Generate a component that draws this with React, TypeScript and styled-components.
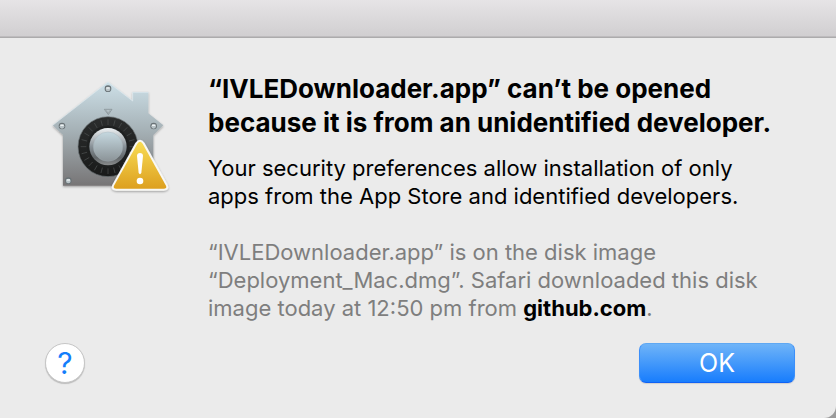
import React from "react";
import styled, { createGlobalStyle } from "styled-components";

const GlobalStyle = createGlobalStyle`
  * { box-sizing: border-box; }
  body {
    margin: 0;
    background: #9b9b9b;
    color: #000;
    font-family: Inter, "Liberation Sans", sans-serif;
  }
`;

const Dialog = styled.main`
  display: flex;
  flex-direction: column;
  min-height: 100vh;
  background: #ebebeb;
  border-bottom-right-radius: 12px;
`;

const TitleBar = styled.header`
  height: 38px;
  background: linear-gradient(#e6e4e6, #d0ced0);
  border-bottom: 1px solid #acabac;
  box-shadow: inset 0 -1px #bdbbbd;
`;

const Content = styled.section`
  display: flex;
  gap: 33px;
  padding: 34px 24px 0 45px;
`;

const IconBox = styled.div`
  flex: none;
  width: 130px;
  padding-top: 6px;

  svg { display: block; width: 100%; }
`;

const Message = styled.div`
  flex: 1;
`;

const Title = styled.h1`
  margin: 0 0 14px;
  font-size: 26px;
  line-height: 34px;
  font-weight: 700;
`;

const Text = styled.p<{ $muted?: boolean }>`
  margin: 0 0 ${(p) => (p.$muted ? 0 : 28)}px;
  font-size: 22px;
  line-height: 28px;
  color: ${(p) => (p.$muted ? "#7e7e7e" : "#000")};
`;

const SiteLink = styled.a`
  color: #000;
  font-weight: 700;
  text-decoration: none;
`;

const Footer = styled.footer`
  display: flex;
  align-items: center;
  justify-content: space-between;
  margin-top: auto;
  padding: 20px 41px 35px 45px;
`;

const HelpButton = styled.button`
  display: grid;
  place-items: center;
  width: 40px;
  height: 40px;
  padding: 0;
  border: 1px solid #c6c6c6;
  border-radius: 50%;
  background: #fff;
  box-shadow: 0 1px 1px rgba(0, 0, 0, 0.2);
  color: #147efb;
  font: 400 30px/30px Inter, sans-serif;
`;

const OkButton = styled.button`
  width: 156px;
  height: 40px;
  padding: 0;
  border: 1px solid;
  border-color: #5fa8f3 #3b8ffa #0f62f5;
  border-radius: 7px;
  background: linear-gradient(#6fb4f8, #187dfd);
  box-shadow: 0 1px 1px rgba(0, 0, 0, 0.12);
  color: #fff;
  font: 400 25px/36px Inter, sans-serif;
`;

const ticks = Array.from({ length: 24 }, (_, i) => i * 15);
const screws = [[204, 56], [66, 168], [341, 168], [85, 332]];

function GatekeeperIcon() {
  return (
    <svg viewBox="15 24 390 360" role="img" aria-label="Security warning">
      <defs>
        <linearGradient id="house" x1="0" y1="0" x2="0" y2="1">
          <stop offset="0" stopColor="#cde0e8" />
          <stop offset="0.45" stopColor="#a7b3b8" />
          <stop offset="1" stopColor="#777576" />
        </linearGradient>
        <linearGradient id="rim" x1="0" y1="0" x2="0" y2="1">
          <stop offset="0" stopColor="#eef2f4" />
          <stop offset="0.5" stopColor="#879096" />
          <stop offset="0.8" stopColor="#62676a" />
          <stop offset="1" stopColor="#8b8d8e" />
        </linearGradient>
        <linearGradient id="knob" x1="0" y1="0" x2="0" y2="1">
          <stop offset="0" stopColor="#c5d8e0" />
          <stop offset="1" stopColor="#8b9397" />
        </linearGradient>
        <linearGradient id="dial" x1="0" y1="0" x2="0" y2="1">
          <stop offset="0" stopColor="#2b2d2d" />
          <stop offset="1" stopColor="#191a1a" />
        </linearGradient>
        <linearGradient id="warning" x1="0" y1="0" x2="0" y2="1">
          <stop offset="0" stopColor="#f8dc55" />
          <stop offset="1" stopColor="#dda01f" />
        </linearGradient>
        <filter id="shadow" x="-10%" y="-10%" width="120%" height="125%">
          <feDropShadow dx="0" dy="3" stdDeviation="3" floodOpacity="0.35" />
        </filter>
      </defs>
      <path
        d="M204 35 L278 92 V66 H325 V130 L370 166 L340 195 V347 H69 V195 L38 166 Z"
        fill="url(#house)"
        filter="url(#shadow)"
      />
      <path d="M38 166 L204 36 L278 93 V67 H325" fill="none" stroke="#e2edf1" strokeWidth="2" />
      {screws.map(([x, y]) => (
        <g key={`${x}-${y}`}>
          <circle cx={x} cy={y} r="10" fill="#697276" />
          <circle cx={x} cy={y + 1} r="7" fill="#b9c3c7" />
          <path d={`M${x - 5} ${y - 2} h10`} stroke="#eef3f5" strokeWidth="4" />
        </g>
      ))}
      <path d="M193 118 H216 L205 134 Z" fill="#b5c2c7" stroke="#7e898e" strokeWidth="2" />
      <path d="M199 121 L204 131 L210 121" fill="none" stroke="#8c979b" strokeWidth="2" />
      <circle cx="204" cy="230" r="90" fill="url(#dial)" stroke="#737a7d" strokeWidth="2" />
      {ticks.map((angle) => (
        <path
          key={angle}
          d="M204 148 v17"
          transform={`rotate(${angle} 204 230)`}
          stroke="#4c5050"
          strokeWidth="2"
        />
      ))}
      <circle cx="204" cy="230" r="63" fill="#1e2020" />
      <circle cx="204" cy="230" r="56" fill="url(#rim)" />
      <circle cx="204" cy="230" r="44" fill="url(#knob)" stroke="#a5b1b6" strokeWidth="1" />
      <path
        d="M286 219 Q300 200 314 219 L383 344 Q390 361 371 362 H229 Q210 361 217 344 Z"
        fill="#f8f8f5"
        filter="url(#shadow)"
      />
      <path
        d="M292 221 Q300 210 308 221 L378 347 Q382 355 371 356 H229 Q218 355 222 347 Z"
        fill="url(#warning)"
      />
      <path d="M291 258 Q291 249 300 249 Q309 249 309 258 L304 309 Q300 316 296 309 Z" fill="#fff" />
      <circle cx="300" cy="333" r="10" fill="#fff" />
    </svg>
  );
}

export default function App() {
  return (
    <>
      <GlobalStyle />
      <Dialog role="alertdialog" aria-labelledby="title" aria-describedby="description">
        <TitleBar />
        <Content>
          <IconBox>
            <GatekeeperIcon />
          </IconBox>
          <Message>
            <Title id="title">
              “IVLEDownloader.app” can’t be opened
              <br />
              because it is from an unidentified developer.
            </Title>
            <Text id="description">
              Your security preferences allow installation of only
              <br />
              apps from the App Store and identified developers.
            </Text>
            <Text $muted>
              “IVLEDownloader.app” is on the disk image
              <br />
              “Deployment_Mac.dmg”. Safari downloaded this disk
              <br />
              image today at 12:50 pm from <SiteLink href="#github">github.com</SiteLink>.
            </Text>
          </Message>
        </Content>
        <Footer>
          <HelpButton type="button" aria-label="Help">?</HelpButton>
          <OkButton type="button">OK</OkButton>
        </Footer>
      </Dialog>
    </>
  );
}
